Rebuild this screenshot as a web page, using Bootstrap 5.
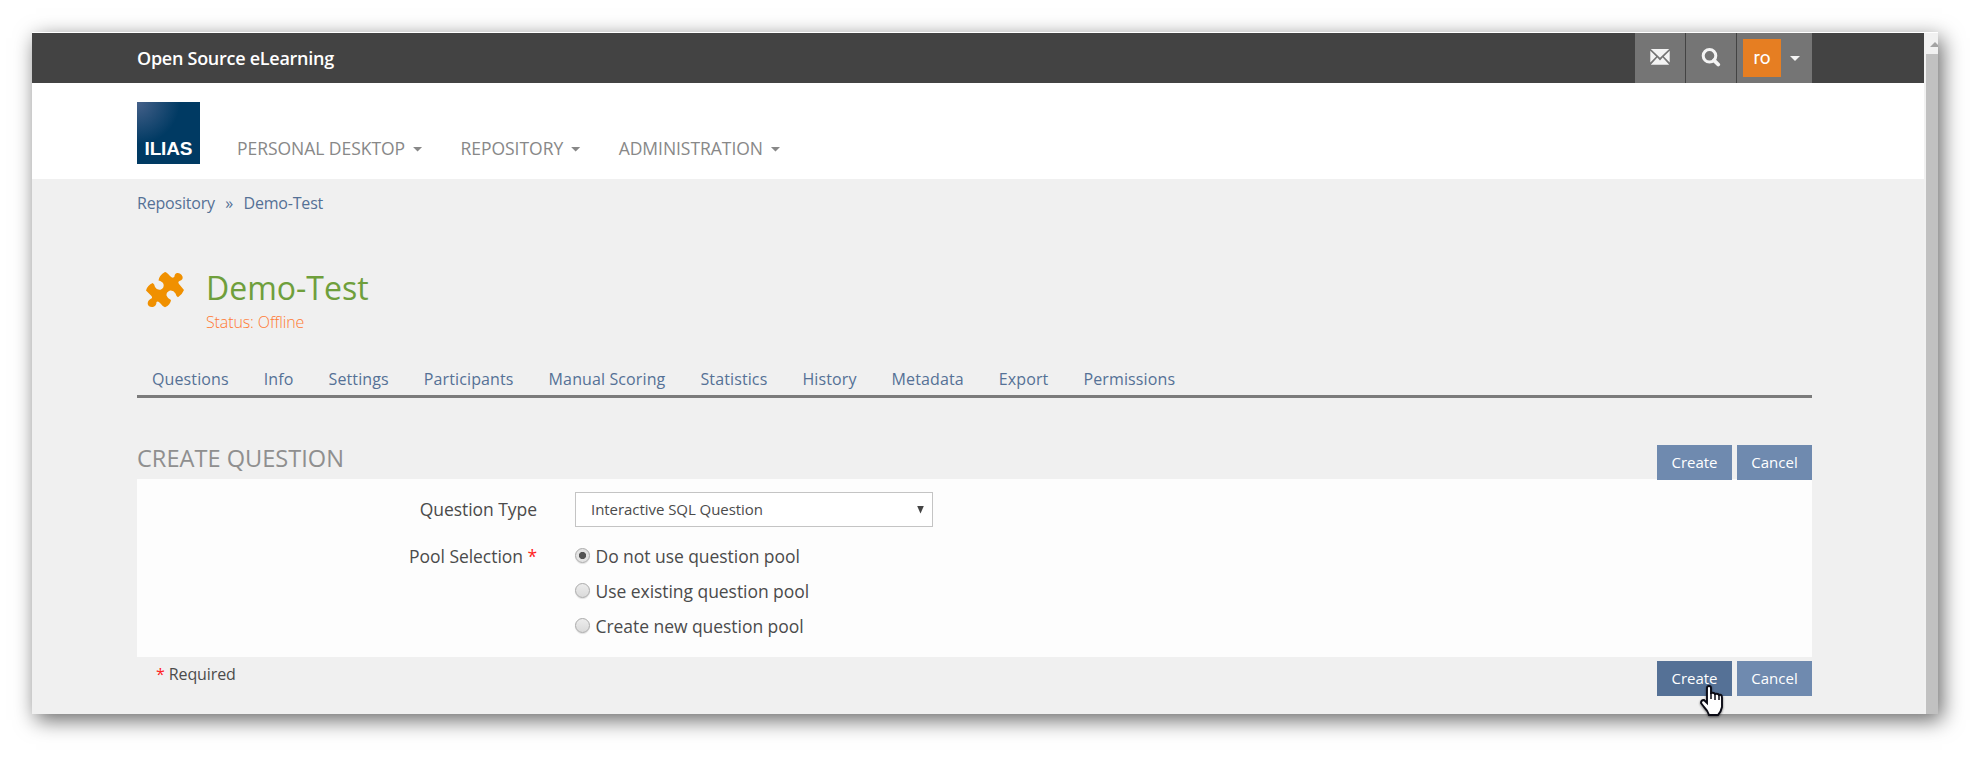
<!DOCTYPE html>
<html lang="en">
<head>
<meta charset="utf-8">
<title>Open Source eLearning</title>
<link href="https://cdn.jsdelivr.net/npm/bootstrap@5.3.0/dist/css/bootstrap.min.css" rel="stylesheet">
<style>
html,body{height:762px;overflow:hidden}
body{background:#fff;font-family:"Open Sans",sans-serif;font-size:16px;line-height:1.43;color:#4b4b4b;padding:32px}
a{text-decoration:none;color:#557196}
.frame{width:1906px;height:682px;background:#f0f0f0;box-shadow:4px 6px 20px rgba(0,0,0,.6);border-top:1px solid #fff}
.view{width:1892px}
.wrap{margin-left:105px;width:1675px}
.topbar{background:#434343;height:50px}
.topbar .site{font-weight:600;font-size:18px;color:#fff;letter-spacing:-.27px;line-height:50px}
.tool{width:50px;background:#757575;height:50px;color:#f4f4f4}
.tool-user{width:75px;padding:0 12px 0 6px}
.avatar{width:38px;height:38px;background:#e67e22;color:#fff;font-family:Roboto,sans-serif;font-size:19px}
.tri{width:10px;height:5px;background:currentColor;clip-path:polygon(0 0,100% 0,50% 100%);display:inline-block;margin-top:1px}
.mainbar{background:#fff;height:96px}
.logo{margin-top:19px;width:63px;height:62px}
.mainnav{margin-left:37px;margin-top:50px;gap:38px}
.mainnav a{color:#888;font-size:17.5px;line-height:25px;gap:7.5px;letter-spacing:-.04px}
.crumbs{padding-top:13px;height:74px;gap:10.5px;line-height:23px;letter-spacing:-.2px}
.ttl{font-size:32px;color:#6f9f3c;line-height:40px;font-weight:400;margin:0}
.off{color:#ff7a33;font-weight:300;line-height:22px;margin-top:3px;letter-spacing:-.12px}
.tabs{border-bottom:3px solid #7b7b7b;height:37px;padding-left:15px;gap:35px;line-height:37px;letter-spacing:.12px}
.sec{height:81px}
.sec h2{font-size:23.6px;color:#8f8f8f;margin:44px 0 0;line-height:32px;font-weight:400}
.bt{background:#6f8aaf;color:#fff;border:0;border-radius:0;font-size:15px;width:75px;height:35px;padding:0;line-height:35px}
.bt-on{background:#557196}
.panel{background:#fdfdfd;height:178px;padding-top:13px;font-size:17.5px;letter-spacing:-.05px}
.lab{width:400px;text-align:right;line-height:35px}
.sel{width:358px;height:35px;border:1px solid #c4c4c4;background:#fff;font-size:15px;padding:0 8px 0 15px}
.down{width:7px;height:8px;background:#444;clip-path:polygon(0 0,100% 0,50% 100%)}
.star{color:#f22}
.opt{height:35px;gap:5.5px}
.rad{width:15px;height:15px;border-radius:50%;border:1px solid #aaa;background:linear-gradient(#ececec,#dadada);box-shadow:0 1px 1px rgba(0,0,0,.12);margin-top:-2px}
.rad-on{background:radial-gradient(circle,#555 0 3.2px,#e4e4e4 4px)}
.sbar{width:14px;background:#f1f1f1;padding-left:2px}
.arrow{height:21px;overflow:hidden;padding:9px 0 0 4px}
.thumb{background:#c1c1c1}
.hand{position:absolute;left:43px;top:28px;filter:drop-shadow(0 1px 1px rgba(0,0,0,.5))}
</style>
</head>
<body>
<div class="frame d-flex">
<div class="view">
  <header class="topbar"><div class="wrap d-flex justify-content-between">
    <span class="site">Open Source eLearning</span>
    <div class="d-flex" style="gap:1px">
      <div class="tool d-flex justify-content-center"><svg width="20" height="16" viewBox="0 0 20 16" style="margin-top:16px" fill="currentColor"><path d="M.8 0h18.4L10 8.7zM.3 1.8 6.2 7.6.3 13.6zM19.7 1.8v11.8l-5.9-6zM7.3 8.6l2.7 2.8 2.7-2.8 6.5 7.2H.8z"/></svg></div>
      <div class="tool d-flex justify-content-center"><svg width="20" height="19" viewBox="0 0 20 19" style="margin-top:15px" fill="none" stroke="currentColor"><circle cx="8.5" cy="7.8" r="6.3" stroke-width="3"/><path d="m13 12.3 4.2 4.2" stroke-width="3.8" stroke-linecap="round"/></svg></div>
      <div class="tool tool-user d-flex align-items-center justify-content-between"><span class="avatar d-flex align-items-center justify-content-center">ro</span><i class="tri"></i></div>
    </div>
  </div></header>
  <nav class="mainbar"><div class="wrap d-flex">
    <svg class="logo" viewBox="0 0 63 62"><defs><radialGradient id="g" cx="0" cy="0" r=".68"><stop offset="0" stop-color="#46618a"/><stop offset="1" stop-color="#003a63"/></radialGradient></defs><rect width="63" height="62" fill="url(#g)"/><text x="7.5" y="52.5" textLength="48" fill="#fff" font-family="Liberation Sans" font-weight="700" font-size="19">ILIAS</text></svg>
    <div class="mainnav d-flex">
      <a href="#" class="d-flex align-items-center">PERSONAL DESKTOP<i class="tri"></i></a>
      <a href="#" class="d-flex align-items-center">REPOSITORY<i class="tri"></i></a>
      <a href="#" class="d-flex align-items-center">ADMINISTRATION<i class="tri"></i></a>
    </div>
  </div></nav>
  <main class="wrap">
    <div class="crumbs d-flex"><a href="#">Repository</a><a href="#">»</a><a href="#">Demo-Test</a></div>
    <div class="d-flex" style="height:108px">
      <svg width="38" height="36" viewBox="0 0 38 36" style="margin:19px 22px 0 9px" fill="#f09000"><path d="M19 0Q20.500 0 24 4Q27 7 28.500 4.500Q28.500 1.500 31 1Q35 .8 36.500 4.500Q37.500 7.500 33.500 9Q31.500 10 33 12L38 18Q36 23 32 25.300Q30.500 25 29.500 21.500Q27.500 18 24 18.500Q20 20 20.500 23.500Q21.500 26.500 25 28Q24.500 33 19 35.300Q17 35 14.500 31.500Q12 28.500 10.500 30Q10.500 34 7 35Q2.500 35.500 1.700 32Q1.500 28.500 4.500 27Q7 26 5.500 24L0 18.500Q1.500 13 6.700 11Q8.500 12 9 15Q11 18.500 14.500 17.700Q18.500 16 17.500 12Q16.500 9.500 12.500 8.500Q13 3.500 19 0Z"/></svg>
      <div style="padding-top:15px"><h1 class="ttl">Demo-Test</h1><div class="off">Status: Offline</div></div>
    </div>
    <div class="tabs d-flex"><a href="#">Questions</a><a href="#">Info</a><a href="#">Settings</a><a href="#">Participants</a><a href="#">Manual Scoring</a><a href="#">Statistics</a><a href="#">History</a><a href="#">Metadata</a><a href="#">Export</a><a href="#">Permissions</a></div>
    <div class="sec d-flex justify-content-between"><h2>CREATE QUESTION</h2><div class="d-flex" style="gap:5px;padding-top:47px"><button class="btn bt">Create</button><button class="btn bt">Cancel</button></div></div>
    <div class="panel">
      <div class="d-flex"><div class="lab">Question Type</div><div class="sel ms-auto d-flex align-items-center justify-content-between" style="margin-right:879px">Interactive SQL Question<i class="down"></i></div></div>
      <div class="d-flex" style="margin-top:12px"><div class="lab">Pool Selection <span class="star">*</span></div>
        <div style="margin-left:38px"><div class="opt d-flex align-items-center"><i class="rad rad-on"></i>Do not use question pool</div><div class="opt d-flex align-items-center"><i class="rad"></i>Use existing question pool</div><div class="opt d-flex align-items-center"><i class="rad"></i>Create new question pool</div></div></div>
    </div>
    <div class="d-flex justify-content-between"><div style="padding:6px 0 0 19px;letter-spacing:-.1px"><span class="star">*</span> Required</div>
      <div class="d-flex position-relative" style="gap:5px;padding-top:4px"><button class="btn bt bt-on">Create</button><button class="btn bt">Cancel</button>
      <svg class="hand" width="24" height="32" viewBox="0 0 24 32"><path d="M7 3Q7 1 9 1T11 3V8Q14 7 15 9Q18 8 19 10Q22 9 22 13V22Q21 27 18 30H9Q8 26 4 22L1 18Q1 15 4 15L7 18Z" fill="#fff" stroke="#0a0a14" stroke-width="1.9"/><path d="M11 8v6M15 9v6M19 10v5" stroke="#0a0a14" stroke-width="1.5"/></svg></div></div>
  </main>
</div>
<div class="sbar"><div class="arrow"><svg width="10" height="5" class="d-block"><path d="M0 5 5 0l5 5z" fill="#a3a3a3"/></svg></div><div class="thumb" style="height:660px"></div></div>
</div>
<script src="https://cdn.jsdelivr.net/npm/bootstrap@5.3.0/dist/js/bootstrap.bundle.min.js"></script>
</body>
</html>
